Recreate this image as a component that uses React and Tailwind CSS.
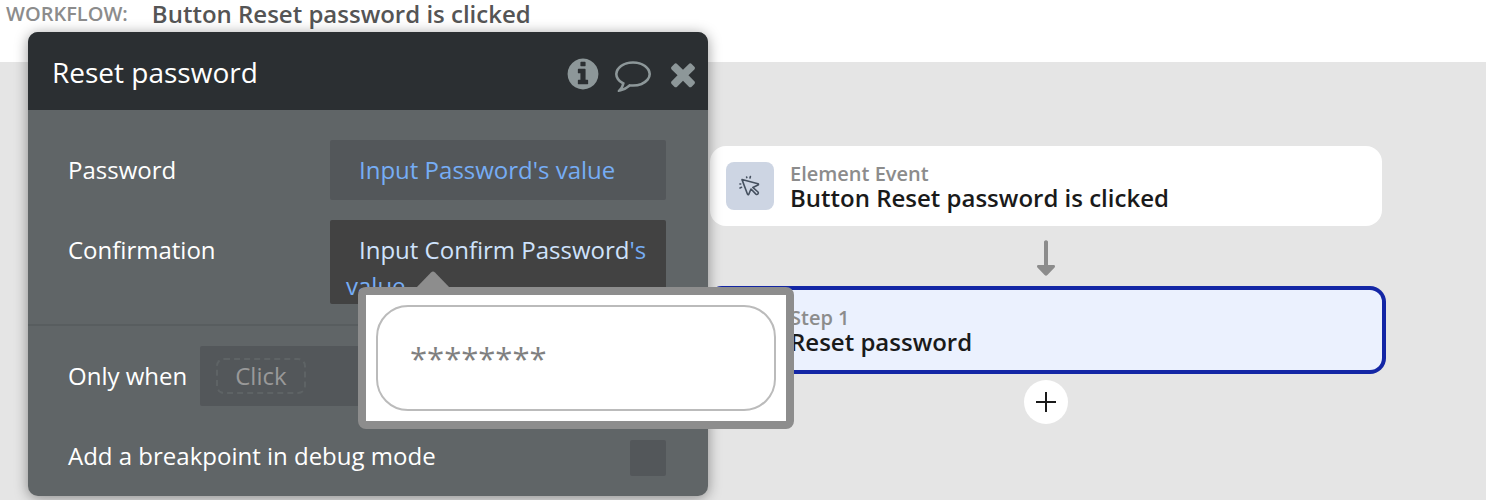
import React from 'react';

function InfoIcon() {
  return (
    <svg viewBox="0 0 1792 1792" className="w-9 h-9" fill="currentColor">
      <path d="M1152 1376v-160q0-14-9-23t-23-9h-96v-512q0-14-9-23t-23-9h-320q-14 0-23 9t-9 23v160q0 14 9 23t23 9h96v320h-96q-14 0-23 9t-9 23v160q0 14 9 23t23 9h448q14 0 23-9t9-23zm-128-896v-160q0-14-9-23t-23-9h-192q-14 0-23 9t-9 23v160q0 14 9 23t23 9h192q14 0 23-9t9-23zm640 416q0 209-103 385.5t-279.5 279.5-385.5 103-385.5-103-279.5-279.5-103-385.5 103-385.5 279.5-279.5 385.5-103 385.5 103 279.5 279.5 103 385.5z" />
    </svg>
  );
}

function CommentIcon() {
  return (
    <svg viewBox="0 0 1792 1792" className="w-9 h-9" fill="currentColor">
      <path d="M896 384q-204 0-381.5 69.5t-282 187.5-104.5 255q0 112 71.5 213.5t201.5 175.5l87 50-27 96q-24 91-70 172 152-63 275-171l43-38 57 6q69 8 130 8 204 0 381.5-69.5t282-187.5 104.5-255-104.5-255-282-187.5-381.5-69.5zm896 512q0 174-120 321.5t-326 233-450 85.5q-70 0-145-8-198 175-460 242-49 14-114 22h-5q-15 0-27-10.5t-16-27.5v-1q-3-4-.5-12t2-10 4.5-9.5l6-9 7-8.5 8-9q7-8 31-34.5t34.5-38 31-39.5 32.5-51 27-59 26-76q-157-89-247.5-220t-90.5-281q0-130 71-248.5t191-204.5 286-136.5 348-50.5 348 50.5 286 136.5 191 204.5 71 248.5z" />
    </svg>
  );
}

function CloseIcon() {
  return (
    <svg viewBox="0 0 1792 1792" className="w-9 h-9" fill="currentColor">
      <path d="M1490 1322q0 40-28 68l-136 136q-28 28-68 28t-68-28l-294-294-294 294q-28 28-68 28t-68-28l-136-136q-28-28-28-68t28-68l294-294-294-294q-28-28-28-68t28-68l136-136q28-28 68-28t68 28l294 294 294-294q28-28 68-28t68 28l136 136q28 28 28 68t-28 68l-294 294 294 294q28 28 28 68z" />
    </svg>
  );
}

function CursorClickIcon() {
  return (
    <svg
      viewBox="0 0 24 24"
      className="w-6 h-6"
      fill="none"
      stroke="#45505f"
      strokeWidth="1.6"
      strokeLinecap="round"
      strokeLinejoin="round"
    >
      <path d="M4 5.600 20 9.800q1 .6 0 1.200L14.800 13.400l5.200 4.600q.8 1-.1 2t-2 .1L13 15l-2.200 5.200q-.7 1-1.300 0z" />
      <path d="M8.600 3l.2.6M12.400 2.500l-.4 1.500M1.900 10l.8 0M2 13.900l1.500-.6" />
    </svg>
  );
}

function PreviewTooltip() {
  return (
    <div className="absolute left-7 top-[67px] z-10 w-[436px] rounded-lg border-8 border-[#8d8d8d] bg-white p-[10px]">
      <svg viewBox="0 0 34 17" className="absolute left-[50px] -top-6 w-[34px] h-[17px]" fill="#8d8d8d">
        <path d="M0 17 15 1.6q2-2 4 0L34 17z" />
      </svg>
      <input
        type="text"
        aria-label="Confirm Password"
        placeholder="********"
        className="block w-full h-[106px] rounded-[32px] border-2 border-[#bbbbbb] px-8 text-[31px] placeholder:text-[#808080] outline-none"
      />
    </div>
  );
}

function PropertyEditor() {
  return (
    <section className="absolute left-7 top-8 w-[680px] rounded-[10px] bg-[#606567] text-2xl leading-9 text-white shadow-[0_2px_14px_rgba(0,0,0,0.4)]">
      <header className="flex items-center justify-between rounded-t-[10px] bg-[#2b2f32] h-[78px] pt-[2px] pl-6 pr-[7px]">
        <h2 className="text-[28px]">Reset password</h2>
        <div className="flex gap-[14px] pt-1 text-[#8d9799]">
          <button aria-label="Info"><InfoIcon /></button>
          <button aria-label="Comment"><CommentIcon /></button>
          <button aria-label="Close"><CloseIcon /></button>
        </div>
      </header>

      <div className="flex flex-col gap-5 pt-[30px] pb-5 pl-10 pr-[42px]">
        <div className="flex items-start justify-between">
          <span id="password-label" className="pt-3">Password</span>
          <button
            aria-labelledby="password-label"
            className="w-[336px] rounded-xs bg-[#53575a] px-4 py-3 text-left text-[#76adf5]"
          >
            <span className="pl-[13px]">Input Password's value</span>
          </button>
        </div>
        <div className="flex items-start justify-between">
          <span id="confirmation-label" className="pt-3">Confirmation</span>
          <div className="relative w-[336px]">
            <button
              aria-labelledby="confirmation-label"
              className="w-full rounded-xs bg-[#424242] pl-4 pr-3 pt-3 text-left text-[#76adf5]"
            >
              <span className="pl-[13px] text-[#cfe2fc]">Input Confirm Password</span>'s value
            </button>
            <PreviewTooltip />
          </div>
        </div>
      </div>

      <div className="flex flex-col gap-8 border-t-2 border-[#585d5f] pt-5 pb-5 pl-10 pr-[42px]">
        <div className="flex items-center gap-[13px]">
          <span>Only when</span>
          <div className="flex-1 rounded-xs bg-[#53575a] px-4 py-3">
            <button className="block h-9 rounded-lg border-2 border-dashed border-[#5e6365] px-[17px] leading-8 text-[#999999]">
              Click
            </button>
          </div>
        </div>
        <div className="flex items-end justify-between">
          <label htmlFor="breakpoint" className="pb-[2px]">Add a breakpoint in debug mode</label>
          <input id="breakpoint" type="checkbox" className="w-9 h-9 appearance-none rounded-xs bg-[#53575a]" />
        </div>
      </div>
    </section>
  );
}

function App() {
  return (
    <div className="relative flex flex-col min-h-screen bg-[#e5e5e5] font-['Open_Sans',sans-serif]">
      <header className="flex items-start gap-6 h-[62px] bg-white px-[6px]">
        <span className="text-xl leading-7 font-semibold text-[#8c8c8c]">WORKFLOW:</span>
        <h1 className="text-2xl leading-7 font-semibold text-[#555555]">Button Reset password is clicked</h1>
      </header>

      <main className="flex flex-col items-center pl-[710px] pr-[104px] pt-21">
        <div className="flex items-center gap-4 w-full h-20 rounded-2xl bg-white px-4">
          <div className="flex items-center justify-center w-12 h-12 rounded-lg bg-[#cdd5e3]">
            <CursorClickIcon />
          </div>
          <div>
            <p className="text-xl leading-6 font-semibold text-[#8c8c8c]">Element Event</p>
            <p className="text-2xl leading-6 font-semibold text-[#1a1a1a]">Button Reset password is clicked</p>
          </div>
        </div>

        <svg viewBox="0 0 18 36" className="w-[18px] h-9 my-[14px]" fill="#8c8c8c">
          <path d="M7 1.5Q9-1 11 1.5V25h5.8q2 .6.8 2.4L10.400 35q-1.400 1.400-2.800 0L.4 27.400Q-.8 25.600 1.200 25H7z" />
        </svg>

        <div className="flex items-center w-full h-20 rounded-xl bg-[#ebf1fe] pl-20 pr-4 ring-4 ring-[#1326a5]">
          <div>
            <p className="text-xl leading-6 font-semibold text-[#8c8c8c]">Step 1</p>
            <p className="text-2xl leading-6 font-semibold text-[#1a1a1a]">Reset password</p>
          </div>
        </div>

        <button aria-label="Add step" className="flex items-center justify-center w-11 h-11 mt-[10px] rounded-full bg-white">
          <svg viewBox="0 0 20 20" className="w-5 h-5" stroke="#1a1a1a" strokeWidth="2">
            <path d="M10 0v20M0 10h20" />
          </svg>
        </button>
      </main>

      <PropertyEditor />
    </div>
  );
}

export default App;
